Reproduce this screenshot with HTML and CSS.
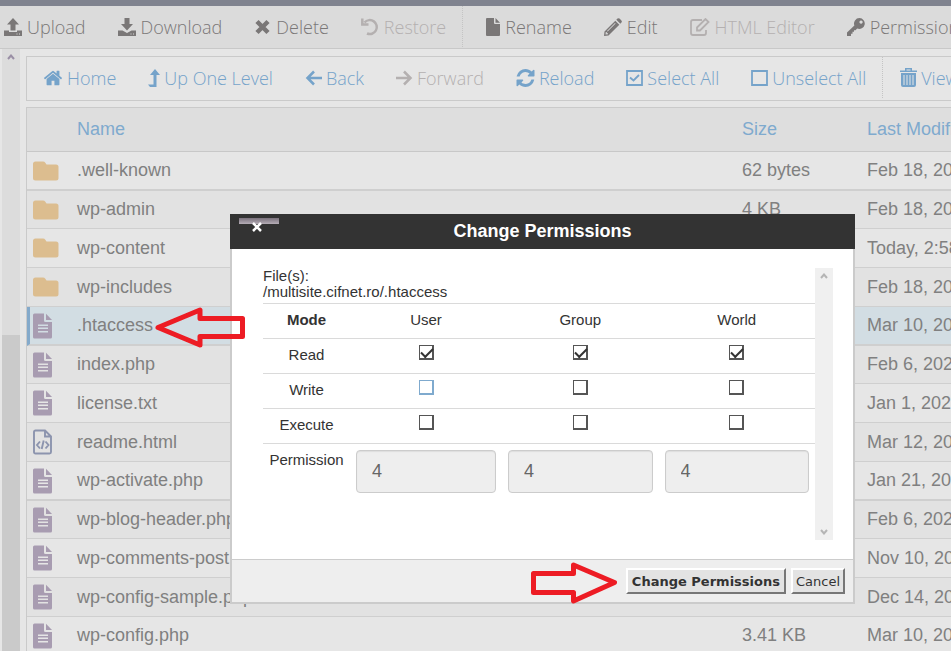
FILE: index.html
```html
<!DOCTYPE html>
<html lang="en">
<head>
  <meta charset="UTF-8">
  <meta name="viewport" content="width=device-width, initial-scale=1.0">
  <title>File Manager</title>
  <link rel="stylesheet" href="styles.css">
</head>
<body>

  <!-- Icons -->
  <svg class="sprite" aria-hidden="true">
    <symbol id="i-folder" viewBox="0 0 26 20">
      <path d="M2.5 0.500h7.500q1.500 0 2.300 1.200l1.200 1.800h9.500q2.500 0 2.500 2.500v11q0 2.500-2.500 2.500h-20.500q-2.500 0-2.500-2.500v-14q0-2.500 2.500-2.500z"/>
    </symbol>
    <symbol id="i-file" viewBox="0 0 20 26">
      <path fill-rule="evenodd" d="M1.500 0.500H11v7q0 1.500 1.500 1.500H19v15q0 1.500-1.500 1.500h-16Q0 25.500 0 24V2Q0 .5 1.500 .5zM5 11.500v1.500h10v-1.500zM5 14.500v1.500h10v-1.500zM5 18v1.500h10V18z"/>
      <path d="M13 .7l6 6.300h-6z"/>
    </symbol>
    <symbol id="i-html" viewBox="0 0 20 26">
      <path d="M2.500 1.500h9.500l6 6v15.500q0 1.500-1.500 1.500h-14q-1.500 0-1.500-1.500v-20q0-1.500 1.500-1.500zM12 1.500v6h6M7 12.500l-3 3.500 3 3.500M12.500 12.500l3 3.500-3 3.500M10.700 11.500l-2 8.500" fill="none" stroke="currentColor" stroke-width="1.900"/>
    </symbol>
  </svg>

  <!-- Top toolbar -->
  <nav class="toolbar">
    <a href="#" class="tool">
      <svg width="18" height="18" viewBox="0 0 18 18"><path d="M9 0l6 6.500h-3.500v6h-5v-6H3z"/><path d="M0 12.500h5v1.500h8v-1.500h5V18H0zM12.500 15.500v1h1v-1zM15 15.500v1h1v-1z" fill-rule="evenodd"/></svg>
      Upload
    </a>
    <a href="#" class="tool">
      <svg width="18" height="18" viewBox="0 0 18 18"><path d="M6.500 0h5v6H15l-6 6.500L3 6h3.500z"/><path d="M0 12.500h4.500L9 15l4.500-2.500H18V18H0zM12.500 15.500v1h1v-1zM15 15.500v1h1v-1z" fill-rule="evenodd"/></svg>
      Download
    </a>
    <a href="#" class="tool">
      <svg width="17" height="18" viewBox="0 0 17 18"><path d="M3 3.500l11 11M14 3.500l-11 11" stroke="currentColor" stroke-width="4.500"/></svg>
      Delete
    </a>
    <a href="#" class="tool off">
      <svg width="18" height="18" viewBox="0 0 18 18"><path d="M3.500 4.500A7 7 0 1 1 6 15.500M1.300 .5V6.500H7.500" fill="none" stroke="currentColor" stroke-width="2.500"/></svg>
      Restore
    </a>
    <a href="#" class="tool divided">
      <svg width="14" height="18" viewBox="0 0 14 18"><path d="M1 0h7v5q0 1 1 1h5v11q0 1-1 1H1q-1 0-1-1V1q0-1 1-1z"/><path d="M9.500 0L14 4.700H9.500z"/></svg>
      Rename
    </a>
    <a href="#" class="tool">
      <svg width="18" height="18" viewBox="0 0 18 18"><path fill-rule="evenodd" d="M11.300 2.800l4 4L4.500 17.500l-4.500.5.500-4.500zM11 5L3 13l.6.600L11.600 5.600zM1.800 14l-.3 2.500 2.500-.3v-1H2.800V14z"/><path d="M12.300 1.800L13.500.600q1-.9 2 0L17.400 2.500q.9 1 0 2L16.300 5.700z"/></svg>
      Edit
    </a>
    <a href="#" class="tool off">
      <svg width="20" height="18" viewBox="0 0 20 18"><path d="M12 2H3Q1 2 1 4v11q0 2 2 2h11q2 0 2-2v-3M7 9.500L15.500 1l3 3L10 12.500H7z" fill="none" stroke="currentColor" stroke-width="1.800"/></svg>
      HTML Editor
    </a>
    <a href="#" class="tool">
      <svg width="18" height="18" viewBox="0 0 18 18"><path fill-rule="evenodd" d="M12.500 0a5.500 5.500 0 1 1-2.300 10.600L8.500 12.200H7v1.600H5.500v2H4V18H0v-3.500L7.400 7.500A5.500 5.500 0 0 1 12.500 0zM14 2.500a1.600 1.600 0 1 0 .1 0z"/></svg>
      Permissions
    </a>
  </nav>

  <div class="workspace">
    <div class="scrollbar">
      <svg width="8" height="6" viewBox="0 0 8 6"><path d="M1 5l3-3.500L7 5" fill="none" stroke="currentColor" stroke-width="2"/></svg>
      <div class="thumb"></div>
    </div>

    <main class="content">
      <!-- Navigation bar -->
      <nav class="actions">
        <a href="#" class="tool">
          <svg width="20" height="20" viewBox="0 70 1792 1650"><path d="M1472 992v480q0 26-19 45t-45 19h-384v-384h-256v384h-384q-26 0-45-19t-19-45v-480q0-1 .5-3t.5-3l575-474 575 474q1 2 1 6zm223-69l-62 74q-8 9-21 11h-3q-13 0-21-7l-692-577-692 577q-12 8-24 7-13-2-21-11l-62-74q-8-10-7-23.500t11-21.500l719-599q32-26 76-26t76 26l244 204v-195q0-14 9-23t23-9h192q14 0 23 9t9 23v408l219 182q10 8 11 21.500t-7 23.500z"/></svg>
          Home
        </a>
        <a href="#" class="tool">
          <svg width="12" height="18" viewBox="0 0 12 18"><path d="M7 0l5 6H8.500v12H2l-2-2.500h5.500V6H2z"/></svg>
          Up One Level
        </a>
        <a href="#" class="tool">
          <svg width="17" height="18" viewBox="0 0 17 18"><path d="M9 2.500L2.500 9 9 15.500M3 9h14" fill="none" stroke="currentColor" stroke-width="2.500"/></svg>
          Back
        </a>
        <a href="#" class="tool off">
          <svg width="17" height="18" viewBox="0 0 17 18"><path d="M8 2.500L14.500 9 8 15.500M14 9H0" fill="none" stroke="currentColor" stroke-width="2.500"/></svg>
          Forward
        </a>
        <a href="#" class="tool">
          <svg width="19" height="18" viewBox="128 128 1536 1536"><path d="M1639 1056q0 5-1 7-64 268-268 434.500t-478 166.500q-146 0-282.500-55t-243.500-157l-129 129q-19 19-45 19t-45-19-19-45v-448q0-26 19-45t45-19h448q26 0 45 19t19 45-19 45l-137 137q71 66 161 102t187 36q134 0 250-65t186-179q11-17 53-117 8-23 30-23h192q13 0 22.500 9.500t9.500 22.500zm25-800v448q0 26-19 45t-45 19h-448q-26 0-45-19t-19-45 19-45l138-138q-148-137-349-137-134 0-250 65t-186 179q-11 17-53 117-8 23-30 23h-199q-13 0-22.500-9.500t-9.500-22.500v-7q65-268 270-434.500t480-166.500q146 0 284 55.500t245 156.500l130-129q19-19 45-19t45 19 19 45z"/></svg>
          Reload
        </a>
        <a href="#" class="tool">
          <svg width="17" height="16" viewBox="0 0 17 16"><path d="M1 1h15v14H1zM4 7.500l3.500 3L13 5" fill="none" stroke="currentColor" stroke-width="1.800"/></svg>
          Select All
        </a>
        <a href="#" class="tool">
          <svg width="17" height="16" viewBox="0 0 17 16"><path d="M1 1h15v14H1z" fill="none" stroke="currentColor" stroke-width="1.800"/></svg>
          Unselect All
        </a>
        <a href="#" class="tool divided">
          <svg width="17" height="20" viewBox="0 0 17 20"><path d="M0 2.500h17V4H0zM5 3V0h7v3h-1.500V1.500h-4V3zM1 5h15v12q0 2-2 2H3q-2 0-2-2z"/><path d="M4 7v10M7 7v10M10 7v10M13 7v10" stroke="#e6e6e6" stroke-width="1"/></svg>
          View Trash
        </a>
      </nav>

      <!-- File list -->
      <table class="files">
        <colgroup><col class="col-icon"><col class="col-name"><col class="col-size"><col></colgroup>
        <thead>
          <tr><th></th><th>Name</th><th>Size</th><th>Last Modified</th></tr>
        </thead>
        <tbody>
          <tr><td><svg class="folder"><use href="#i-folder"/></svg></td><td>.well-known</td><td>62 bytes</td><td>Feb 18, 2022</td></tr>
          <tr><td><svg class="folder"><use href="#i-folder"/></svg></td><td>wp-admin</td><td>4 KB</td><td>Feb 18, 2022</td></tr>
          <tr><td><svg class="folder"><use href="#i-folder"/></svg></td><td>wp-content</td><td></td><td>Today, 2:58 PM</td></tr>
          <tr><td><svg class="folder"><use href="#i-folder"/></svg></td><td>wp-includes</td><td></td><td>Feb 18, 2022</td></tr>
          <tr class="selected"><td><svg class="file"><use href="#i-file"/></svg></td><td>.htaccess</td><td></td><td>Mar 10, 2022</td></tr>
          <tr><td><svg class="file"><use href="#i-file"/></svg></td><td>index.php</td><td></td><td>Feb 6, 2020</td></tr>
          <tr><td><svg class="file"><use href="#i-file"/></svg></td><td>license.txt</td><td></td><td>Jan 1, 2022</td></tr>
          <tr><td><svg class="file html"><use href="#i-html"/></svg></td><td>readme.html</td><td></td><td>Mar 12, 2022</td></tr>
          <tr><td><svg class="file"><use href="#i-file"/></svg></td><td>wp-activate.php</td><td></td><td>Jan 21, 2021</td></tr>
          <tr><td><svg class="file"><use href="#i-file"/></svg></td><td>wp-blog-header.php</td><td></td><td>Feb 6, 2020</td></tr>
          <tr><td><svg class="file"><use href="#i-file"/></svg></td><td>wp-comments-post.php</td><td></td><td>Nov 10, 2021</td></tr>
          <tr><td><svg class="file"><use href="#i-file"/></svg></td><td>wp-config-sample.php</td><td></td><td>Dec 14, 2021</td></tr>
          <tr><td><svg class="file"><use href="#i-file"/></svg></td><td>wp-config.php</td><td>3.41 KB</td><td>Mar 10, 2022</td></tr>
        </tbody>
      </table>
    </main>
  </div>

  <!-- Change Permissions dialog -->
  <form class="dialog" role="dialog" aria-labelledby="dialog-title">
    <header class="dialog-header">
      <button type="button" class="close" aria-label="Close">
        <svg width="12" height="12" viewBox="0 0 12 12"><path d="M2 2l8 8M10 2l-8 8" stroke="#fff" stroke-width="2.500"/></svg>
      </button>
      <h2 id="dialog-title">Change Permissions</h2>
    </header>
    <div class="dialog-body">
      <div class="pane">
        <p>File(s):<br>/multisite.cifnet.ro/.htaccess</p>
        <table class="modes">
          <colgroup><col class="col-mode"><col class="col-user"><col><col></colgroup>
          <tr><th>Mode</th><td>User</td><td>Group</td><td>World</td></tr>
          <tr>
            <td>Read</td>
            <td><input type="checkbox" aria-label="User read" checked></td>
            <td><input type="checkbox" aria-label="Group read" checked></td>
            <td><input type="checkbox" aria-label="World read" checked></td>
          </tr>
          <tr>
            <td>Write</td>
            <td><input type="checkbox" class="active" aria-label="User write"></td>
            <td><input type="checkbox" aria-label="Group write"></td>
            <td><input type="checkbox" aria-label="World write"></td>
          </tr>
          <tr>
            <td>Execute</td>
            <td><input type="checkbox" aria-label="User execute"></td>
            <td><input type="checkbox" aria-label="Group execute"></td>
            <td><input type="checkbox" aria-label="World execute"></td>
          </tr>
          <tr class="values">
            <td>Permission</td>
            <td><input type="text" aria-label="User permission" value="4" readonly></td>
            <td><input type="text" aria-label="Group permission" value="4" readonly></td>
            <td><input type="text" aria-label="World permission" value="4" readonly></td>
          </tr>
        </table>
      </div>
      <div class="pane-scroll">
        <svg width="8" height="6" viewBox="0 0 8 6"><path d="M1 5l3-3.500L7 5" fill="none" stroke="currentColor" stroke-width="2"/></svg>
        <svg width="8" height="6" viewBox="0 0 8 6"><path d="M1 1l3 3.500L7 1" fill="none" stroke="currentColor" stroke-width="2"/></svg>
      </div>
    </div>
    <footer class="dialog-footer">
      <button type="submit" class="btn primary">Change Permissions</button>
      <button type="button" class="btn">Cancel</button>
    </footer>
  </form>

  <!-- Pointers -->
  <svg class="pointer pointer-file" width="92" height="42" viewBox="0 0 92 42"><path d="M4 21.500L46 4v8.500h42.500v18H46V39z"/></svg>
  <svg class="pointer pointer-submit" width="90" height="44" viewBox="0 0 90 44"><path d="M3.500 12.500h40V4L84.500 21.500 43.500 40v-8.500h-40z"/></svg>

</body>
</html>
```

FILE: styles.css
```css
/* General Styles */
* {
  margin: 0;
  padding: 0;
  box-sizing: border-box;
}

body {
  height: 100vh;
  overflow: hidden;
  display: flex;
  flex-direction: column;
  font-family: "Liberation Sans", Arial, sans-serif;
  background-color: #e6e6e6;
  color: #808080;
  border-top: 6px solid #80838f;
}

.sprite {
  position: absolute;
  width: 0;
  height: 0;
}

svg {
  fill: currentColor;
  flex: none;
}

/* Toolbars */
.toolbar,
.actions {
  display: flex;
  flex: none;
  white-space: nowrap;
  overflow: hidden;
  font-family: "Open Sans", sans-serif;
  font-size: 18px;
  font-weight: 300;
}

.toolbar {
  height: 43px;
  padding-bottom: 1px;
  background-color: #dbdbdb;
  border-bottom: 1px solid #c8c8c8;
}

.toolbar .tool:first-child {
  padding-left: 4px;
}

.tool {
  display: flex;
  flex: none;
  align-items: center;
  gap: 5px;
  padding: 0 16px;
  color: #7a7777;
  text-decoration: none;
}

.tool.divided {
  padding-left: 23px;
  border-left: 1px dotted #c4c4c4;
}

.actions {
  height: 45px;
  padding-bottom: 2px;
  border: 1px solid #cacaca;
  border-right: none;
}

.actions .tool {
  gap: 4px;
  color: #75a3ca;
}

.actions .divided {
  padding-left: 17px;
}

.toolbar .tool.off,
.actions .tool.off {
  color: #b4b0b0;
}

/* Page */
.workspace {
  display: flex;
  flex: 1;
  min-height: 0;
  gap: 6px;
  padding-left: 2px;
}

.scrollbar {
  display: flex;
  flex: none;
  flex-direction: column;
  align-items: center;
  width: 18px;
  padding-top: 5px;
  background-color: #dcdcdc;
  color: #9a8fa5;
}

.thumb {
  width: 100%;
  height: 53%;
  margin-top: auto;
  background-color: #cacaca;
}

.content {
  display: flex;
  flex: 1;
  flex-direction: column;
  min-width: 0;
  gap: 6px;
  padding-top: 7px;
  overflow: hidden;
}

/* File list */
.files {
  width: 130%;
  table-layout: fixed;
  border-spacing: 0;
  border: 1px solid #cacaca;
  font-size: 18px;
}

.col-icon {
  width: 50px;
}

.col-name {
  width: 665px;
}

.col-size {
  width: 125px;
}

.files th {
  height: 44px;
  text-align: left;
  font-weight: normal;
  color: #7faace;
  background-color: #dedede;
  border-bottom: 1px solid #c8c8c8;
}

.files td {
  height: 39px;
  border-bottom: 1px solid #cfcfcf;
}

.files td:first-child {
  padding-left: 6px;
}

.files tbody tr:nth-child(even) {
  background-color: #e2e2e2;
}

.files tbody tr:nth-child(4n+1) td {
  border-bottom-width: 2px;
}

.files tbody tr:nth-child(4n+2) td {
  height: 38px;
}

.files .selected {
  background-color: #d2dde3;
}

.files .selected td:first-child {
  border-left: 3px solid #84aacb;
  padding-left: 3px;
}

.files svg {
  display: block;
}

.folder {
  width: 26px;
  height: 20px;
  color: #dcbd8f;
}

.file {
  width: 20px;
  height: 26px;
  color: #a89cb1;
}

.file.html {
  color: #8c94ae;
}

/* Dialog */
.dialog {
  position: absolute;
  top: 214px;
  left: 230px;
  width: 625px;
  color: #333;
  background-color: #fff;
  border: 2px solid #cbcbcb;
  border-top: none;
}

.dialog-header {
  position: relative;
  height: 35px;
  margin: 0 -2px;
  background-color: #333;
  color: #fff;
  text-align: center;
}

.dialog-header h2 {
  font-size: 18px;
  line-height: 35px;
}

.close {
  position: absolute;
  top: 4px;
  left: 9px;
  width: 40px;
  height: 18px;
  border: none;
  background: linear-gradient(#7a717c, #b5adb6 6px, #333 6px);
}

.close svg {
  display: block;
  margin: 0 0 0 12px;
}

.dialog-body {
  display: flex;
  padding: 19px 20px 19px 31px;
}

.pane {
  flex: 1;
  font-size: 15px;
  line-height: 16px;
}

.pane-scroll {
  display: flex;
  flex-direction: column;
  align-items: center;
  justify-content: space-between;
  width: 18px;
  height: 272px;
  padding: 5px 0;
  color: #b5b5b5;
  background-color: #f0f0f0;
}

.modes {
  width: 100%;
  margin-top: 3px;
  table-layout: fixed;
  border-spacing: 0;
  text-align: center;
}

.col-mode {
  width: 87px;
}

.col-user {
  width: 152px;
}

.modes th,
.modes td {
  height: 35px;
  border-top: 1px solid #dadada;
  vertical-align: top;
  padding-top: 8px;
}

.modes .values td {
  padding: 6px 6px 0;
}

.modes .values td:first-child {
  padding: 8px 0 0;
}

.modes input[type="checkbox"] {
  appearance: none;
  display: block;
  width: 15px;
  height: 15px;
  margin: -2px auto 0;
  border: 1px solid #555;
  border-right-width: 2px;
  border-bottom-width: 2px;
}

.modes input[type="checkbox"]:checked::after {
  content: "";
  display: block;
  width: 10px;
  height: 5px;
  margin: 2px 0 0 1px;
  border: solid #333;
  border-width: 0 0 2px 2px;
  transform: rotate(-45deg);
}

.modes input[type="checkbox"].active {
  border-color: #7faace;
}

.modes input[type="text"] {
  display: block;
  width: 100%;
  height: 43px;
  padding: 0 15px;
  border: 1px solid #ccc;
  border-radius: 4px;
  background-color: #eee;
  box-shadow: inset 0 1px 1px #ddd;
  color: #666;
  font-family: "Liberation Sans", Arial, sans-serif;
  font-size: 18px;
}

.dialog-footer {
  display: flex;
  justify-content: flex-end;
  gap: 5px;
  padding: 8px;
  border-top: 1px solid #ccc;
  background-color: #eee;
}

.btn {
  height: 26px;
  padding: 0 3px;
  border: 2px solid;
  border-color: #fff #777 #777 #fff;
  background-color: #e3e3e3;
  color: #333;
  font-family: "DejaVu Sans", Verdana, sans-serif;
  font-size: 13px;
}

.btn.primary {
  padding: 0 4px;
  font-weight: bold;
}

/* Pointers */
.pointer {
  position: absolute;
  fill: none;
  stroke: #ed1c24;
  stroke-width: 5;
  stroke-linejoin: round;
}

.pointer-file {
  top: 306px;
  left: 154px;
}

.pointer-submit {
  top: 561px;
  left: 530px;
}
```
